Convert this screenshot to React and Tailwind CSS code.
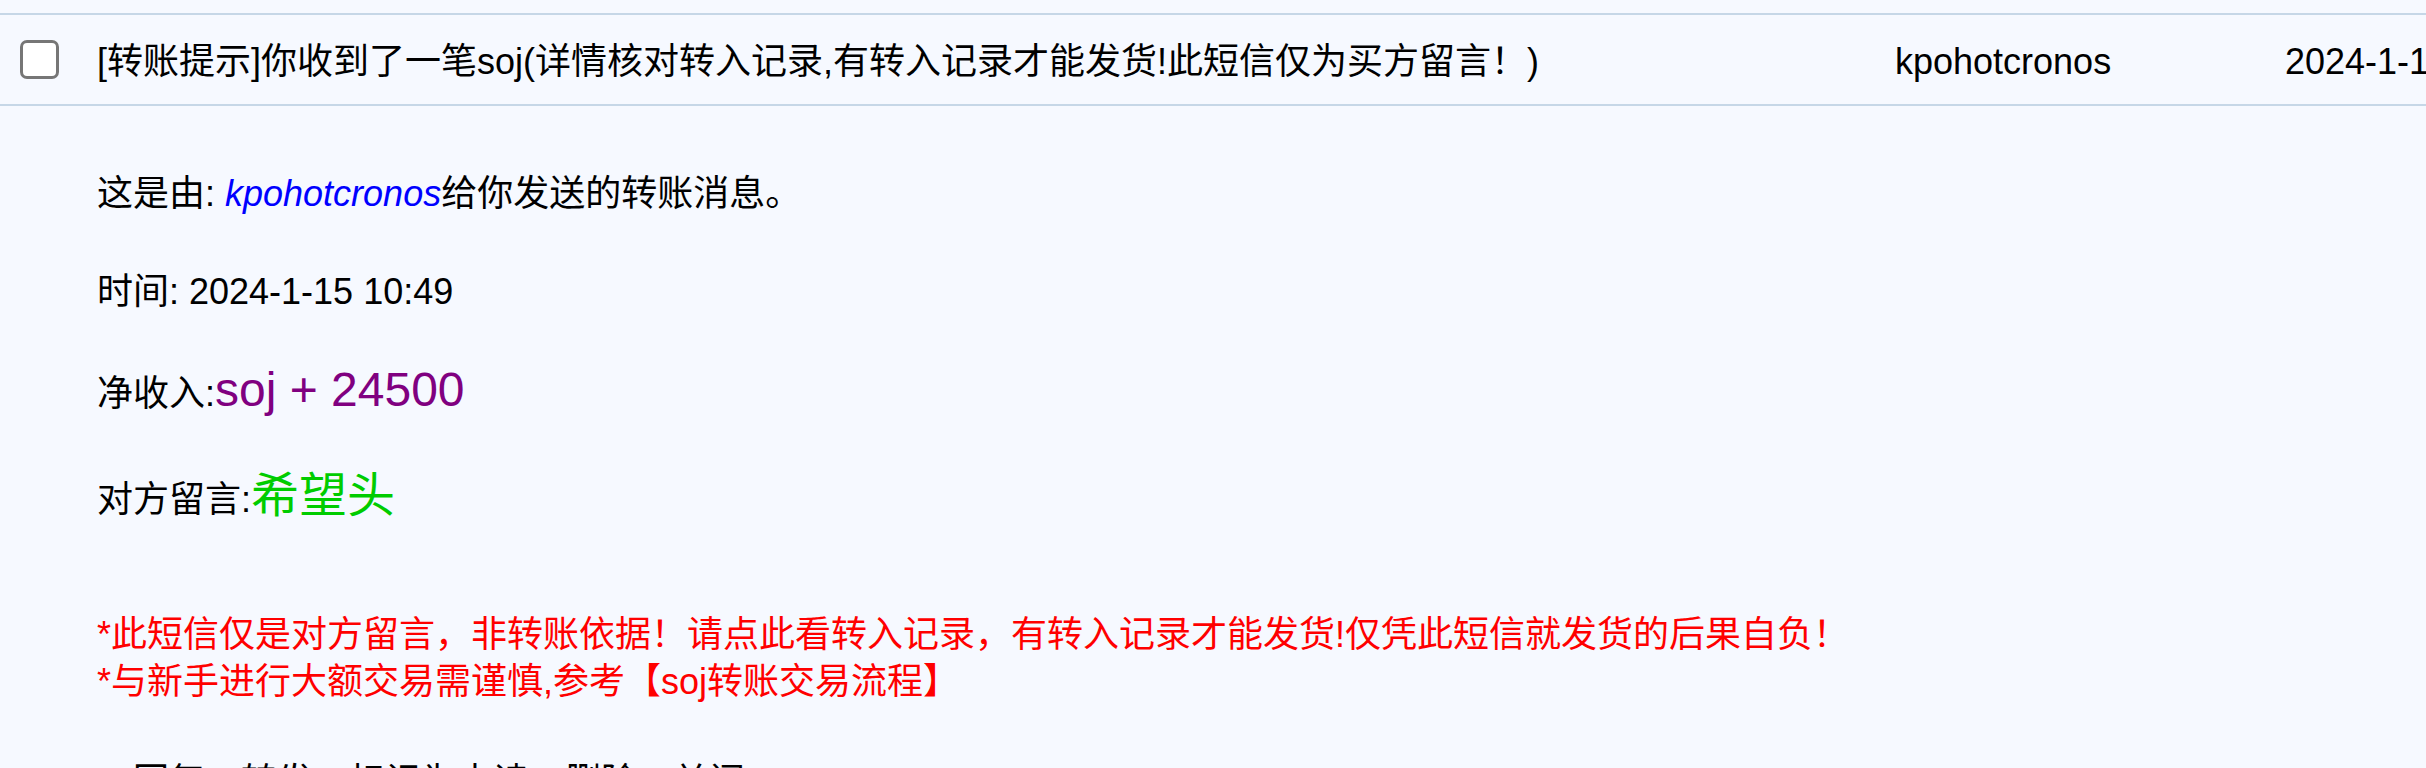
export default function App() {
  return (
    <div className="min-h-screen w-full overflow-hidden bg-[#f6f9ff] text-black font-['Liberation_Sans','Noto_Sans_CJK_SC',sans-serif] text-[36px] leading-[36px]">
      {/* 上一行的尾部 */}
      <div className="h-[13px]" />

      {/* 消息标题行 */}
      <div className="flex h-[93px] items-center whitespace-nowrap border-y-2 border-[#c6d7e7]">
        <div className="ml-[20px] h-[39px] w-[39px] shrink-0 rounded-[7px] border-[3px] border-[#767676] bg-white" />
        <div className="ml-[38px] mt-[5px] w-[1798px] shrink-0">
          [转账提示]你收到了一笔soj(详情核对转入记录,有转入记录才能发货!此短信仅为买方留言！)
        </div>
        <div className="mt-[5px] w-[390px] shrink-0">kpohotcronos</div>
        <div className="mt-[5px] shrink-0">2024-1-15 10:49</div>
      </div>

      {/* 消息内容 */}
      <div className="pl-[97px] pt-[70px] whitespace-nowrap">
        <div>
          这是由: <i className="text-[#0000ff]">kpohotcronos</i>给你发送的转账消息。
        </div>
        <div className="mt-[62px]">时间: 2024-1-15 10:49</div>
        <div className="mt-[62px]">
          净收入:<span className="text-[48px] text-[#800080]">soj + 24500</span>
        </div>
        <div className="mt-[66px]">
          对方留言:<span className="text-[48px] text-[#00cc00]">希望头</span>
        </div>
        <div className="mt-[93px] leading-[47px] text-[#ff0000]">
          <div>*此短信仅是对方留言，非转账依据！请点此看转入记录，有转入记录才能发货!仅凭此短信就发货的后果自负！</div>
          <div>*与新手进行大额交易需谨慎,参考【soj转账交易流程】</div>
        </div>
        <div className="mt-[59px]">　回复　转发　标记为未读　删除　关闭</div>
      </div>
    </div>
  );
}
